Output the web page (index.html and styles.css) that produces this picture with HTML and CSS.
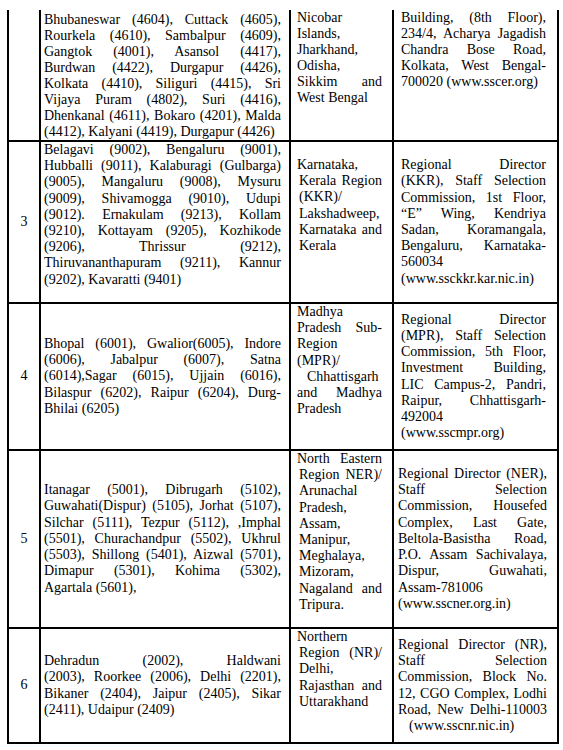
FILE: index.html
```html
<!DOCTYPE html>
<html lang="en">
<head>
    <meta charset="UTF-8">
    <title>SSC Regional Offices</title>
    <link rel="stylesheet" href="styles.css">
</head>
<body>

    <table class="regions">
        <colgroup>
            <col class="c-num">
            <col class="c-cities">
            <col class="c-zone">
            <col class="c-office">
        </colgroup>

        <!-- continued from previous page -->
        <tr class="cut r1">
            <td class="num"></td>
            <td class="cities top">
                <span class="ln">Bhubaneswar (4604), Cuttack (4605),</span>
                <span class="ln">Rourkela (4610), Sambalpur (4609),</span>
                <span class="ln">Gangtok (4001), Asansol (4417),</span>
                <span class="ln">Burdwan (4422), Durgapur (4426),</span>
                <span class="ln">Kolkata (4410), Siliguri (4415), Sri</span>
                <span class="ln">Vijaya Puram (4802), Suri (4416),</span>
                <span class="ln">Dhenkanal (4611), Bokaro (4201), Malda</span>
                <span class="ln last">(4412), Kalyani (4419), Durgapur (4426)</span>
            </td>
            <td class="zone top">
                <span class="ln">Nicobar</span>
                <span class="ln">Islands,</span>
                <span class="ln">Jharkhand,</span>
                <span class="ln">Odisha,</span>
                <span class="ln">Sikkim and</span>
                <span class="ln last">West Bengal</span>
            </td>
            <td class="office top">
                <span class="ln">Building, (8th Floor),</span>
                <span class="ln">234/4, Acharya Jagadish</span>
                <span class="ln">Chandra Bose Road,</span>
                <span class="ln">Kolkata, West Bengal-</span>
                <span class="ln last">700020 (www.sscer.org)</span>
            </td>
        </tr>

        <tr class="r2">
            <td class="num">3</td>
            <td class="cities top">
                <span class="ln">Belagavi (9002), Bengaluru (9001),</span>
                <span class="ln">Hubballi (9011), Kalaburagi (Gulbarga)</span>
                <span class="ln">(9005), Mangaluru (9008), Mysuru</span>
                <span class="ln">(9009), Shivamogga (9010), Udupi</span>
                <span class="ln">(9012). Ernakulam (9213), Kollam</span>
                <span class="ln">(9210), Kottayam (9205), Kozhikode</span>
                <span class="ln">(9206), Thrissur (9212),</span>
                <span class="ln">Thiruvananthapuram (9211), Kannur</span>
                <span class="ln last">(9202), Kavaratti (9401)</span>
            </td>
            <td class="zone top drop">
                <span class="ln">Karnataka,</span>
                <span class="ln nudge">Kerala Region</span>
                <span class="ln nudge">(KKR)/</span>
                <span class="ln nudge">Lakshadweep,</span>
                <span class="ln nudge">Karnataka and</span>
                <span class="ln last nudge">Kerala</span>
            </td>
            <td class="office">
                <span class="ln">Regional Director</span>
                <span class="ln">(KKR), Staff Selection</span>
                <span class="ln">Commission, 1st Floor,</span>
                <span class="ln">“E” Wing, Kendriya</span>
                <span class="ln">Sadan, Koramangala,</span>
                <span class="ln">Bengaluru, Karnataka-</span>
                <span class="ln">560034</span>
                <span class="ln last">(www.ssckkr.kar.nic.in)</span>
            </td>
        </tr>

        <tr class="r3">
            <td class="num">4</td>
            <td class="cities">
                <span class="ln">Bhopal (6001), Gwalior(6005), Indore</span>
                <span class="ln">(6006), Jabalpur (6007), Satna</span>
                <span class="ln">(6014),Sagar (6015), Ujjain (6016),</span>
                <span class="ln">Bilaspur (6202), Raipur (6204), Durg-</span>
                <span class="ln last">Bhilai (6205)</span>
            </td>
            <td class="zone top">
                <span class="ln">Madhya</span>
                <span class="ln">Pradesh Sub-</span>
                <span class="ln">Region</span>
                <span class="ln">(MPR)/</span>
                <span class="ln indent">Chhattisgarh</span>
                <span class="ln">and Madhya</span>
                <span class="ln last">Pradesh</span>
            </td>
            <td class="office">
                <span class="ln">Regional Director</span>
                <span class="ln">(MPR), Staff Selection</span>
                <span class="ln">Commission, 5th Floor,</span>
                <span class="ln">Investment Building,</span>
                <span class="ln">LIC Campus-2, Pandri,</span>
                <span class="ln">Raipur, Chhattisgarh-</span>
                <span class="ln">492004</span>
                <span class="ln last">(www.sscmpr.org)</span>
            </td>
        </tr>

        <tr class="r4">
            <td class="num">5</td>
            <td class="cities">
                <span class="ln">Itanagar (5001), Dibrugarh (5102),</span>
                <span class="ln">Guwahati(Dispur) (5105), Jorhat (5107),</span>
                <span class="ln">Silchar (5111), Tezpur (5112), ,Imphal</span>
                <span class="ln">(5501), Churachandpur (5502), Ukhrul</span>
                <span class="ln">(5503), Shillong (5401), Aizwal (5701),</span>
                <span class="ln">Dimapur (5301), Kohima (5302),</span>
                <span class="ln last">Agartala (5601),</span>
            </td>
            <td class="zone top">
                <span class="ln">North Eastern</span>
                <span class="ln nudge">Region NER)/</span>
                <span class="ln nudge">Arunachal</span>
                <span class="ln nudge">Pradesh,</span>
                <span class="ln nudge">Assam,</span>
                <span class="ln nudge">Manipur,</span>
                <span class="ln nudge">Meghalaya,</span>
                <span class="ln nudge">Mizoram,</span>
                <span class="ln nudge">Nagaland and</span>
                <span class="ln last nudge">Tripura.</span>
            </td>
            <td class="office wide">
                <span class="ln">Regional Director (NER),</span>
                <span class="ln">Staff Selection</span>
                <span class="ln">Commission, Housefed</span>
                <span class="ln">Complex, Last Gate,</span>
                <span class="ln">Beltola-Basistha Road,</span>
                <span class="ln">P.O. Assam Sachivalaya,</span>
                <span class="ln">Dispur, Guwahati,</span>
                <span class="ln">Assam-781006</span>
                <span class="ln last">(www.sscner.org.in)</span>
            </td>
        </tr>

        <tr class="r5">
            <td class="num">6</td>
            <td class="cities">
                <span class="ln">Dehradun (2002), Haldwani</span>
                <span class="ln">(2003), Roorkee (2006), Delhi (2201),</span>
                <span class="ln">Bikaner (2404), Jaipur (2405), Sikar</span>
                <span class="ln last">(2411), Udaipur (2409)</span>
            </td>
            <td class="zone top">
                <span class="ln">Northern</span>
                <span class="ln nudge">Region (NR)/</span>
                <span class="ln nudge">Delhi,</span>
                <span class="ln nudge">Rajasthan and</span>
                <span class="ln last nudge">Uttarakhand</span>
            </td>
            <td class="office wide">
                <span class="ln">Regional Director (NR),</span>
                <span class="ln">Staff Selection</span>
                <span class="ln">Commission, Block No.</span>
                <span class="ln">12, CGO Complex, Lodhi</span>
                <span class="ln">Road, New Delhi-110003</span>
                <span class="ln last url">(www.sscnr.nic.in)</span>
            </td>
        </tr>
    </table>

</body>
</html>
```

FILE: styles.css
```css
body {
    margin: 0;
    padding: 10px 0 0 7px;
    background-color: #fff;
    color: #000;
    font-family: "Liberation Serif", "Times New Roman", serif;
    font-size: 14px;
    line-height: 16.2px;
}
.regions {
    border-collapse: collapse;
    table-layout: fixed;
    width: 550px;
}
.c-num { width: 32px; }
.c-cities { width: 250px; }
.c-zone { width: 103px; }
.c-office { width: 165px; }
.regions td {
    border: 2px solid #000;
    padding: 0;
    vertical-align: middle;
}
.regions tr.cut td {
    border-top: none;
}
.regions td.top {
    vertical-align: top;
}
.num {
    text-align: center;
}
.regions td.cities {
    padding: 0 8px 0 3px;
}
.regions td.zone {
    padding: 0 10px 0 6px;
}
.regions td.zone.drop {
    padding-top: 15px;
}
.regions td.office {
    padding: 0 11px 0 7px;
}
.regions td.office.wide {
    padding: 0 10px 0 4px;
}
.ln {
    display: block;
    text-align: justify;
    text-align-last: justify;
}
.ln.last {
    text-align-last: left;
}
.ln.nudge {
    padding-left: 2px;
}
.ln.indent {
    padding-left: 10px;
}
.ln.url {
    padding-left: 11px;
}
.r1 { height: 130px; }
.r1 td { line-height: 16px; }
.r1 td.cities { padding-top: 2px; }
.r2 { height: 162px; }
.r3 { height: 147px; }
.r4 { height: 178px; }
.r5 { height: 115px; }
```
